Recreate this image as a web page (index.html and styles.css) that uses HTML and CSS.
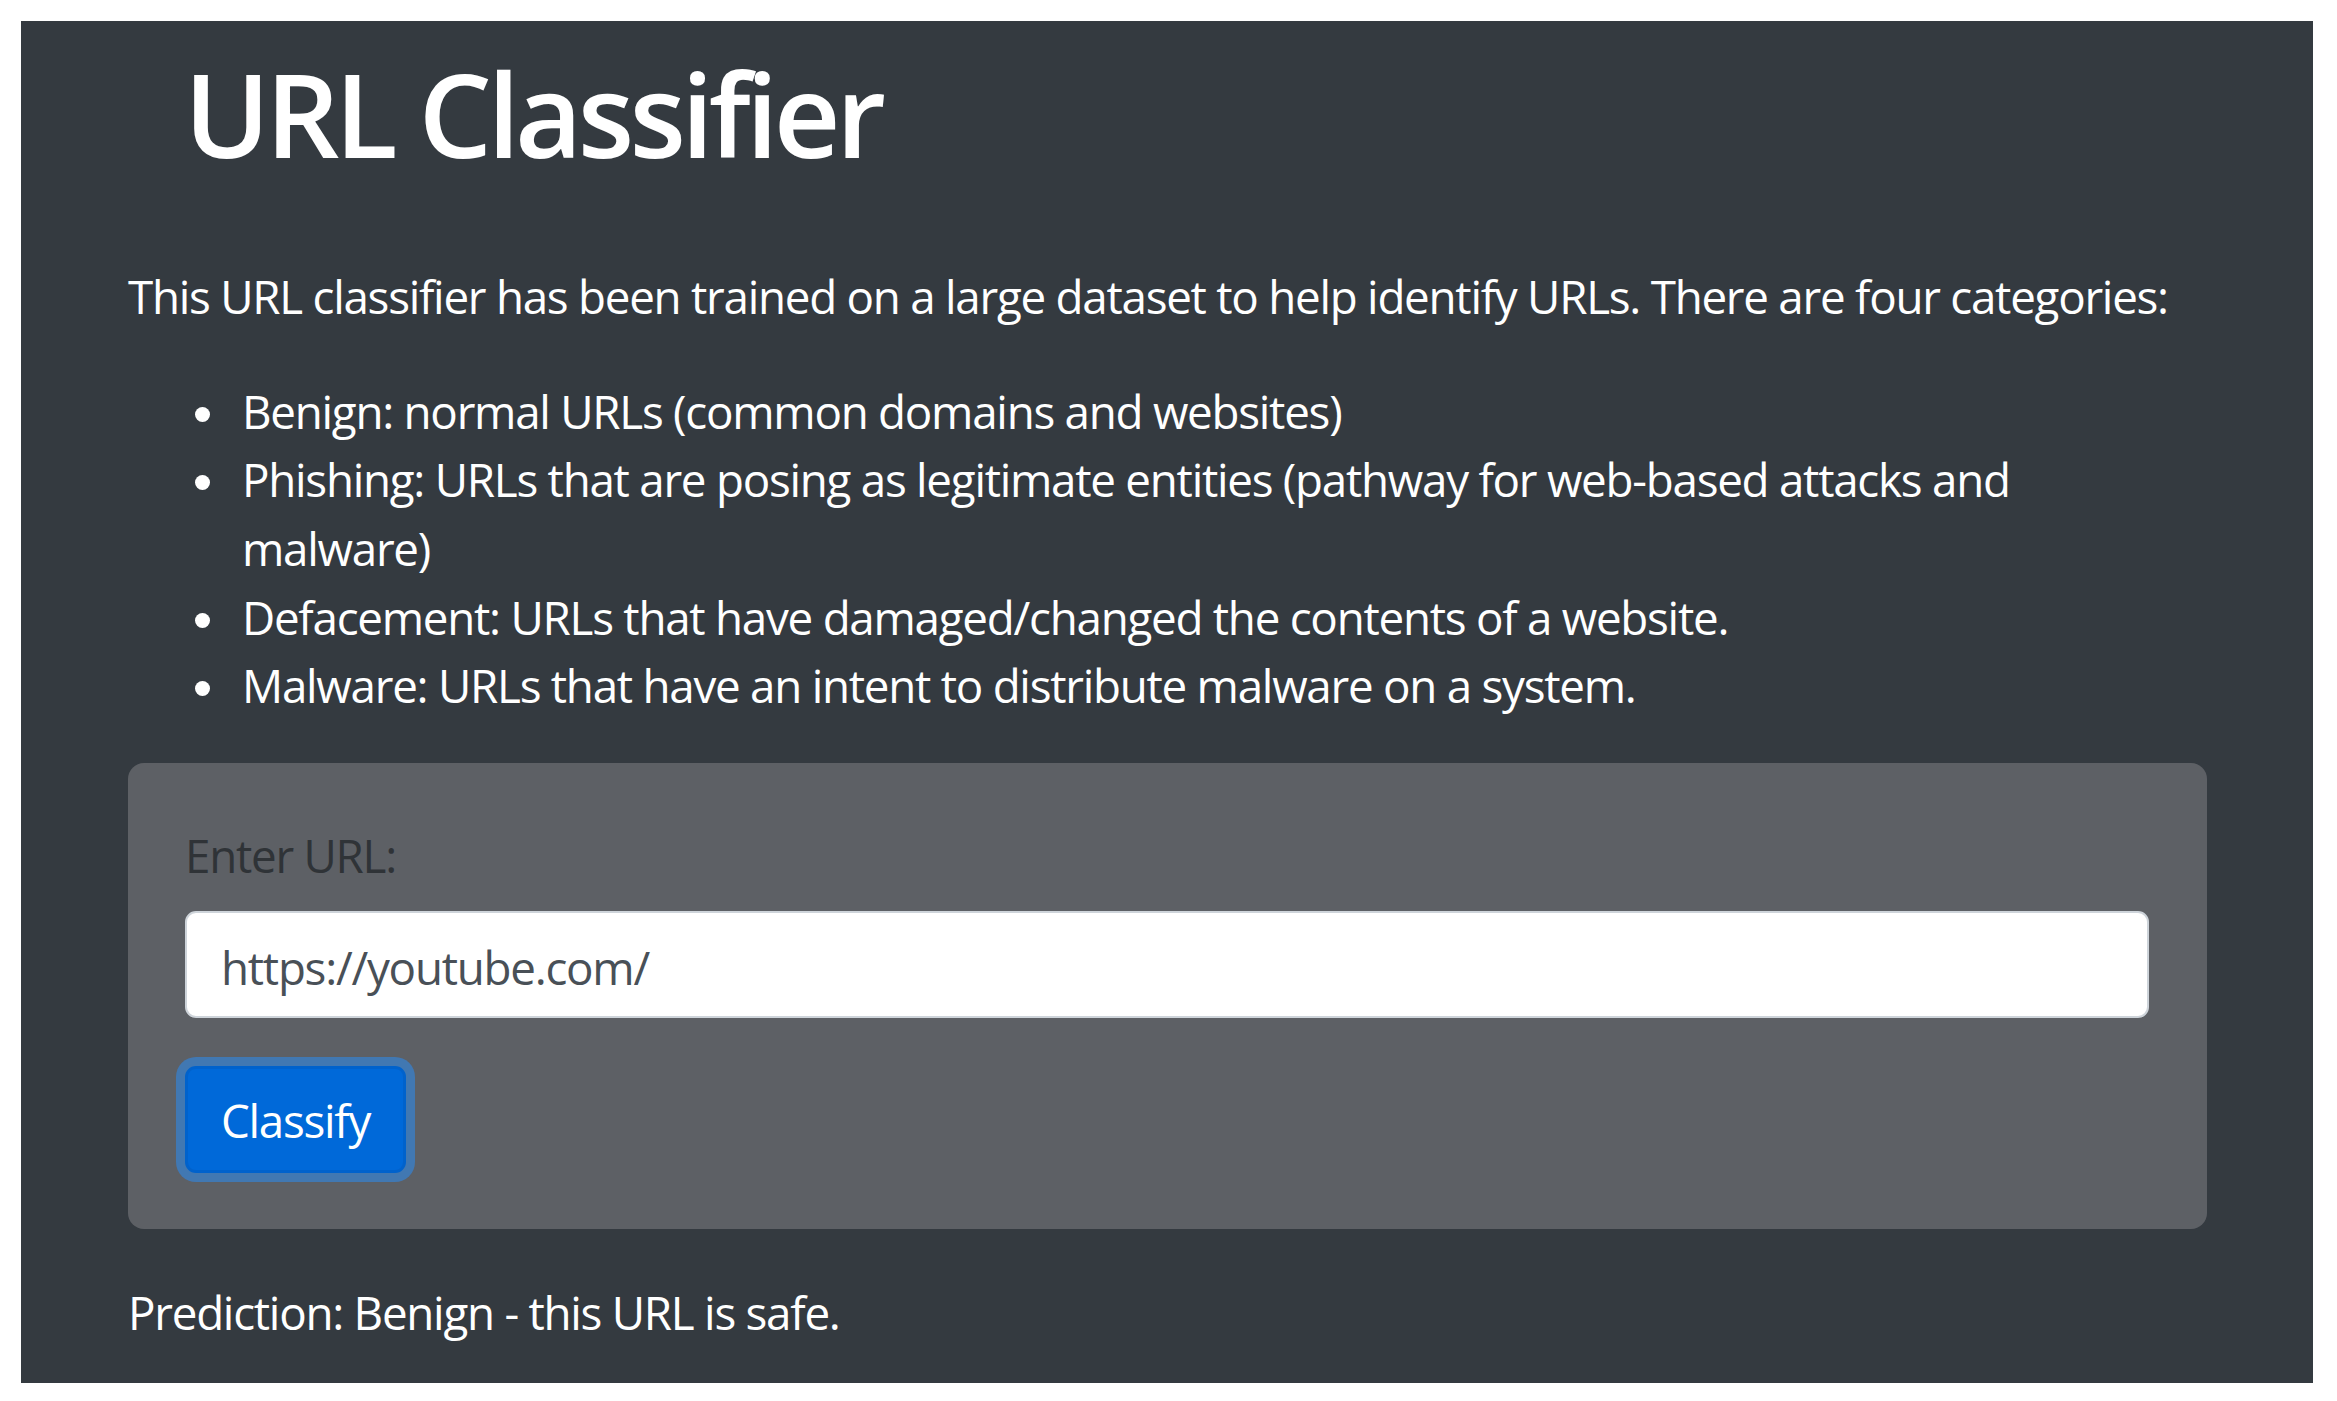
FILE: index.html
```html
<!DOCTYPE html>
<html lang="en">
<head>
<meta charset="utf-8">
<title>URL Classifier</title>
<link rel="stylesheet" href="styles.css">
</head>
<body>
<div class="frame">
  <main class="container">
    <h1 class="title">URL Classifier</h1>
    <p class="intro">This URL classifier has been trained on a large dataset to help identify URLs. There are four categories:</p>
    <ul class="categories">
      <li>Benign: normal URLs (common domains and websites)</li>
      <li>Phishing: URLs that are posing as legitimate entities (pathway for web-based attacks and malware)</li>
      <li>Defacement: URLs that have damaged/changed the contents of a website.</li>
      <li>Malware: URLs that have an intent to distribute malware on a system.</li>
    </ul>
    <form class="panel">
      <div class="form-group">
        <label class="label" for="url">Enter URL:</label>
        <input class="input" id="url" type="text" value="https://youtube.com/">
      </div>
      <button class="btn" type="button">Classify</button>
    </form>
    <p class="prediction">Prediction: Benign - this URL is safe.</p>
  </main>
</div>
</body>
</html>
```
FILE: styles.css
```css
html, body {
  margin: 0;
  padding: 0;
  background: #ffffff;
}

body {
  font-family: "Open Sans", "Noto Sans", sans-serif;
  font-size: 45.76px;
  line-height: 68.64px;
  letter-spacing: -1.26px;
  color: #ffffff;
}

.frame {
  margin: 21px 24px 0 21px;
  height: 1362px;
  background: #343a40;
  overflow: hidden;
}

.container {
  padding: 23px 106px 0 107px;
}

.title {
  margin: 0 0 79px 0;
  padding-left: 56px;
  font-size: 116px;
  line-height: 139px;
  font-weight: 600;
  letter-spacing: -4.7px;
  color: #ffffff;
}

.intro {
  margin: 0 0 46px 0;
}

.categories {
  margin: 0 0 43px 0;
  padding-left: 114px;
  list-style: none;
}

.categories li {
  position: relative;
}

.categories li::before {
  content: "";
  position: absolute;
  left: -47px;
  top: 30px;
  width: 15px;
  height: 15px;
  border-radius: 50%;
  background: #ffffff;
}

.panel {
  margin: 0 0 49px 0;
  padding: 58px 58px 56px 57px;
  background: #5d6065;
  border-radius: 16px;
}

.form-group {
  display: flex;
  flex-direction: column;
  margin-bottom: 48px;
}

.label {
  color: #2f3337;
  margin-bottom: 22px;
}

.input {
  box-sizing: border-box;
  height: 107px;
  padding: 4px 34px 0 34px;
  border: 2px solid #ced4da;
  border-radius: 11px;
  background: #ffffff;
  color: #495057;
  font-family: inherit;
  font-size: 45.76px;
  letter-spacing: -1.26px;
  outline: none;
}

.btn {
  display: block;
  box-sizing: border-box;
  width: 221px;
  height: 107px;
  padding: 0;
  border: 3px solid #0062cc;
  border-radius: 11px;
  background: #0069d9;
  color: #ffffff;
  font-family: inherit;
  font-size: 45.76px;
  letter-spacing: -1.26px;
  line-height: 68.64px;
  box-shadow: 0 0 0 9px rgba(38, 143, 255, 0.5);
  cursor: pointer;
}

.prediction {
  margin: 0;
}
```
